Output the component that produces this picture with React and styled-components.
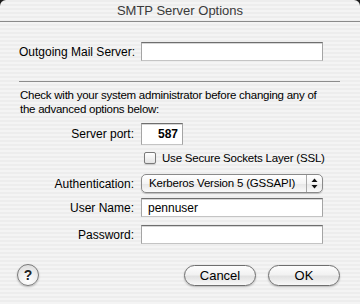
import styled, { createGlobalStyle } from 'styled-components'

/*---> Global <---*/
const GlobalStyle = createGlobalStyle`
  html, body {
    margin: 0;
    padding: 0;
    background: #1c1c1c;
  }
  body {
    font-family: "Liberation Sans", Arial, sans-serif;
    -webkit-font-smoothing: antialiased;
  }
`

const stripes = `repeating-linear-gradient(
  to bottom,
  #ededed 0px,
  #ededed 2px,
  #f4f4f4 2px,
  #f4f4f4 4px
)`

/*---> Component <---*/
function App() {
  return (
    <>
      <GlobalStyle />
      <Window>
        <TitleBar>SMTP Server Options</TitleBar>
        <Content>
          <Row $top={20}>
            <Label>Outgoing Mail Server:</Label>
            <TextField defaultValue="" />
          </Row>

          <Separator />

          <Note>
            Check with your system administrator before changing any of
            <br />
            the advanced options below:
          </Note>

          <Row $top={7}>
            <Label>Server port:</Label>
            <PortField defaultValue="587" />
          </Row>

          <Row $top={7}>
            <span />
            <CheckRow>
              <CheckBox />
              <CheckText>Use Secure Sockets Layer (SSL)</CheckText>
            </CheckRow>
          </Row>

          <Row $top={10}>
            <Label>Authentication:</Label>
            <PopUp>
              <PopUpText>Kerberos Version 5 (GSSAPI)</PopUpText>
              <PopUpArrows>
                <svg width="7" height="11" viewBox="0 0 7 11">
                  <path d="M3.5 0.5 L6.5 4 L0.5 4 Z" fill="#111" />
                  <path d="M3.5 10.5 L6.5 7 L0.5 7 Z" fill="#111" />
                </svg>
              </PopUpArrows>
            </PopUp>
          </Row>

          <Row $top={5}>
            <Label>User Name:</Label>
            <TextField defaultValue="pennuser" />
          </Row>

          <Row $top={8}>
            <Label>Password:</Label>
            <TextField type="password" defaultValue="" />
          </Row>
        </Content>

        <Footer>
          <HelpButton>?</HelpButton>
          <Buttons>
            <PillButton>Cancel</PillButton>
            <PillButton>OK</PillButton>
          </Buttons>
        </Footer>
      </Window>
    </>
  )
}

/*---> Styles <---*/
const Window = styled.div`
  width: 360px;
  height: 304px;
  background: ${stripes};
  border-radius: 6px 6px 0 0;
  overflow: hidden;
  color: #000;
`

const TitleBar = styled.div`
  height: 21px;
  line-height: 22px;
  border-bottom: 1px solid #8a8a8a;
  text-align: center;
  font-size: 13px;
  color: #3a3a3a;
`

const Content = styled.div`
  padding: 0 20px 0 19px;
`

const Row = styled.div`
  display: grid;
  grid-template-columns: 115px 1fr;
  column-gap: 7px;
  align-items: center;
  padding-right: 17px;
  margin-top: ${(p) => p.$top}px;
`

const Label = styled.label`
  text-align: right;
  font-size: 12px;
  line-height: 14px;
  white-space: nowrap;
`

const TextField = styled.input`
  box-sizing: border-box;
  width: 100%;
  height: 19px;
  margin: 0;
  padding: 0 6px;
  font-family: inherit;
  font-size: 12px;
  color: #000;
  background: #fff;
  border: 1px solid #a4a4a4;
  border-top-color: #6e6e6e;
  border-bottom-color: #c4c4c4;
  box-shadow: inset 0 1px 0 #d6d6d6;
  outline: none;
`

const PortField = styled(TextField)`
  width: 42px;
  height: 22px;
  padding: 0 4px;
  text-align: right;
  font-weight: bold;
  font-size: 12px;
`

const Separator = styled.div`
  height: 1px;
  margin-top: 20px;
  background: #8c8c8c;
`

const Note = styled.p`
  margin: 6px 0 0 1px;
  font-size: 11.5px;
  letter-spacing: -0.25px;
  line-height: 14px;
  white-space: nowrap;
`

const CheckRow = styled.div`
  display: flex;
  align-items: center;
  gap: 6px;
  height: 12px;
  padding-left: 3px;
`

const CheckBox = styled.span`
  box-sizing: border-box;
  width: 12px;
  height: 12px;
  border: 1px solid #7a7a7a;
  border-radius: 2px;
  background: linear-gradient(#ffffff, #e4e4e4);
  box-shadow: 0 1px 1px rgba(0, 0, 0, 0.15);
`

const CheckText = styled.span`
  font-size: 11.5px;
  letter-spacing: -0.2px;
  white-space: nowrap;
`

const PopUp = styled.div`
  box-sizing: border-box;
  display: flex;
  align-items: stretch;
  height: 19px;
  width: 182px;
  border: 1px solid #8a8a8a;
  border-radius: 5px;
  background: linear-gradient(#ffffff 0%, #f4f4f4 50%, #e6e6e6 51%, #fafafa 100%);
  box-shadow: 0 1px 1px rgba(0, 0, 0, 0.2);
`

const PopUpText = styled.span`
  flex: 1;
  padding-left: 7px;
  font-size: 11.5px;
  letter-spacing: -0.2px;
  line-height: 17px;
  white-space: nowrap;
  overflow: hidden;
`

const PopUpArrows = styled.span`
  display: flex;
  align-items: center;
  justify-content: center;
  width: 15px;
  border-left: 1px solid #a8a8a8;
`

const Footer = styled.div`
  display: flex;
  align-items: center;
  justify-content: space-between;
  margin-top: 20px;
  padding: 0 20px 0 17px;
`

const HelpButton = styled.button`
  box-sizing: border-box;
  width: 22px;
  height: 22px;
  margin: 0;
  padding: 0;
  border-radius: 50%;
  border: 1px solid #7a7a7a;
  background: radial-gradient(circle at 50% 80%, #ffffff 0%, #f0f0f0 45%, #d8d8d8 100%);
  box-shadow: 0 1px 2px rgba(0, 0, 0, 0.25);
  font-family: inherit;
  font-size: 14px;
  font-weight: bold;
  color: #222;
  line-height: 20px;
`

const Buttons = styled.div`
  display: flex;
  gap: 12px;
`

const PillButton = styled.button`
  box-sizing: border-box;
  width: 72px;
  height: 21px;
  margin: 0;
  padding: 0;
  border-radius: 11px;
  border: 1px solid #6e6e6e;
  background: linear-gradient(#fdfdfd 0%, #f2f2f2 45%, #e2e2e2 55%, #f8f8f8 100%);
  box-shadow: 0 1px 2px rgba(0, 0, 0, 0.25);
  font-family: inherit;
  font-size: 13px;
  color: #000;
  line-height: 19px;
`

export default App
